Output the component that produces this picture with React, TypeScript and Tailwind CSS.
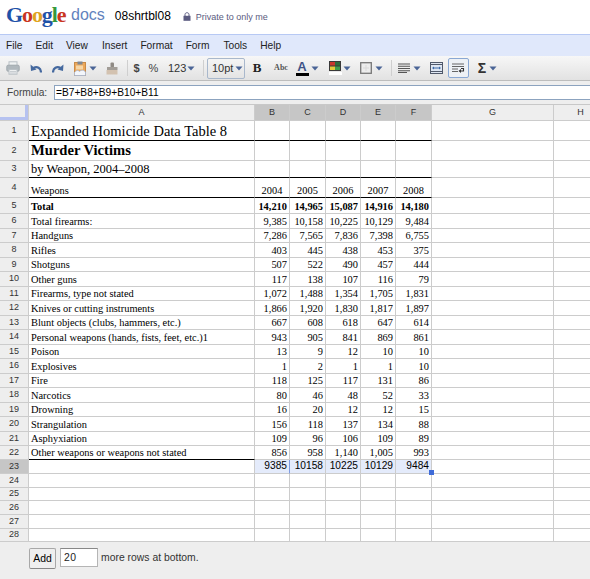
import React from "react";

const SANS = "font-['Liberation_Sans',Arial,sans-serif]";
const SERIF = "font-['Liberation_Serif','Times_New_Roman',serif]";

type Row = { n: number; a?: string; v?: string[]; kind?: string };

const rows: Row[] = [
  { n: 1, a: "Expanded Homicide Data Table 8", kind: "t1" },
  { n: 2, a: "Murder Victims", kind: "t2" },
  { n: 3, a: "by Weapon, 2004–2008", kind: "t3" },
  { n: 4, a: "Weapons", v: ["2004", "2005", "2006", "2007", "2008"], kind: "h" },
  { n: 5, a: "Total", v: ["14,210", "14,965", "15,087", "14,916", "14,180"], kind: "b" },
  { n: 6, a: "Total firearms:", v: ["9,385", "10,158", "10,225", "10,129", "9,484"] },
  { n: 7, a: "Handguns", v: ["7,286", "7,565", "7,836", "7,398", "6,755"] },
  { n: 8, a: "Rifles", v: ["403", "445", "438", "453", "375"] },
  { n: 9, a: "Shotguns", v: ["507", "522", "490", "457", "444"] },
  { n: 10, a: "Other guns", v: ["117", "138", "107", "116", "79"] },
  { n: 11, a: "Firearms, type not stated", v: ["1,072", "1,488", "1,354", "1,705", "1,831"] },
  { n: 12, a: "Knives or cutting instruments", v: ["1,866", "1,920", "1,830", "1,817", "1,897"] },
  { n: 13, a: "Blunt objects (clubs, hammers, etc.)", v: ["667", "608", "618", "647", "614"] },
  { n: 14, a: "Personal weapons (hands, fists, feet, etc.)1", v: ["943", "905", "841", "869", "861"] },
  { n: 15, a: "Poison", v: ["13", "9", "12", "10", "10"] },
  { n: 16, a: "Explosives", v: ["1", "2", "1", "1", "10"] },
  { n: 17, a: "Fire", v: ["118", "125", "117", "131", "86"] },
  { n: 18, a: "Narcotics", v: ["80", "46", "48", "52", "33"] },
  { n: 19, a: "Drowning", v: ["16", "20", "12", "12", "15"] },
  { n: 20, a: "Strangulation", v: ["156", "118", "137", "134", "88"] },
  { n: 21, a: "Asphyxiation", v: ["109", "96", "106", "109", "89"] },
  { n: 22, a: "Other weapons or weapons not stated", v: ["856", "958", "1,140", "1,005", "993"], kind: "last" },
  { n: 23, v: ["9385", "10158", "10225", "10129", "9484"], kind: "sel" },
  { n: 24 },
  { n: 25 },
  { n: 26 },
  { n: 27 },
  { n: 28 },
];

const Arrow = () => (
  <svg width="8" height="5" viewBox="0 0 8 5" className="block">
    <path d="M0.5 0.5H7.5L4 4.5Z" fill="#4a6496" />
  </svg>
);

const ArrowSlot = ({ className = "" }: { className?: string }) => (
  <div className={`w-[8px] flex justify-center ${className}`}>
    <Arrow />
  </div>
);

const Sep = ({ className = "" }: { className?: string }) => (
  <div className={`w-px h-[16px] bg-[#cfcfcf] ${className}`} />
);

const Printer = () => (
  <svg width="14" height="14" viewBox="0 0 14 14">
    <rect x="3" y="0.8" width="8" height="4" fill="#f0f2f3" stroke="#b9c0c5" />
    <rect x="0.8" y="4.2" width="12.4" height="6" rx="1.2" fill="#b0b8bd" stroke="#a2aaaf" />
    <rect x="3" y="8.5" width="8" height="4.7" fill="#eef0f1" stroke="#b9c0c5" />
    <path d="M4 10.5H10M4 12H10" stroke="#c8cdd1" />
  </svg>
);

const Undo = ({ flip = false }: { flip?: boolean }) => (
  <svg width="12" height="10" viewBox="0 0 12 10" className={flip ? "-scale-x-100" : ""}>
    <path d="M11 9.5C11 5 7 3 3.5 5" fill="none" stroke="#45699f" strokeWidth="2.2" />
    <path d="M0.5 1.5L1 8L6.5 6.5Z" fill="#45699f" />
  </svg>
);

const Paste = () => (
  <svg width="12" height="15" viewBox="0 0 12 15">
    <rect x="0.5" y="1.5" width="11" height="13" fill="#eda85a" stroke="#c98b47" />
    <rect x="3.5" y="0.5" width="5" height="3" fill="#7f8894" />
    <rect x="2" y="4.5" width="7" height="4" fill="#f6d6a6" />
    <path d="M0.5 14.5V11.5C2.5 9 4 9 5.5 10.5C7.5 8.5 10 9 11.5 11V14.5Z" fill="#f3f6fb" stroke="#9db4d8" strokeWidth="0.7" />
  </svg>
);

const Paint = () => (
  <svg width="12" height="13" viewBox="0 0 12 13">
    <rect x="4.5" y="0.5" width="3.5" height="5" rx="1" fill="#8f8a84" />
    <rect x="1" y="5" width="10.5" height="3" fill="#a29d97" />
    <path d="M0.5 8H11.5V12.5H0.5Z" fill="#d3c2b0" />
  </svg>
);

const Fill = () => (
  <svg width="12" height="10" viewBox="0 0 12 10">
    <rect width="12" height="10" fill="#3a3a3a" />
    <rect x="1" y="1" width="5" height="3.5" fill="#c8362c" />
    <rect x="6" y="1" width="5" height="3.5" fill="#2c6b3c" />
    <rect x="1" y="5.5" width="5" height="3.5" fill="#e3c83a" />
    <rect x="6" y="5.5" width="5" height="3.5" fill="#3c9c4c" />
  </svg>
);

const Border = () => (
  <svg width="12" height="12" viewBox="0 0 12 12">
    <rect x="0.7" y="0.7" width="10.6" height="10.6" fill="#ececec" stroke="#777" strokeWidth="1.3" />
    <path d="M6 3V9M3 6H9" stroke="#d8d8d8" />
  </svg>
);

const Align = () => (
  <svg width="12" height="10" viewBox="0 0 12 10">
    <path d="M0 1H12M0 3.3H12M0 5.5H12M0 7.7H12M0 9.5H9" stroke="#555" strokeWidth="1.1" />
  </svg>
);

const Merge = () => (
  <svg width="13" height="12" viewBox="0 0 13 12">
    <rect x="0.5" y="0.5" width="12" height="11" fill="#dfe7f3" stroke="#50596a" />
    <path d="M0.5 2.5H12.5M0.5 9.5H12.5" stroke="#50596a" />
    <path d="M3 6H10" stroke="#3d6aa8" />
    <path d="M2 6L4 4.5V7.5ZM11 6L9 4.5V7.5Z" fill="#3d6aa8" />
  </svg>
);

const Wrap = () => (
  <svg width="13" height="10" viewBox="0 0 13 10">
    <path d="M0 1H12M0 3.5H12M0 6H6M0 8.5H6" stroke="#666" strokeWidth="1.1" />
    <path d="M9 5.5H11.5V8H8.5" fill="none" stroke="#333" strokeWidth="1.1" />
    <path d="M9 6L9 10L6.5 8Z" fill="#333" />
  </svg>
);

const Lock = () => (
  <svg width="8" height="9" viewBox="0 0 8 9" className="block">
    <path d="M2 4V2.6C2 1.4 2.9 0.7 4 0.7C5.1 0.7 6 1.4 6 2.6V4" fill="none" stroke="#5b5b80" />
    <rect x="0.5" y="3.8" width="7" height="5" fill="#5b5b80" />
  </svg>
);

function Toolbar() {
  return (
    <div className={`flex items-center h-[25px] border-b border-[#bdbdbd] bg-gradient-to-b from-[#f7f7f7] to-[#e2e2e2] text-[#333] text-[11px] ${SANS}`}>
      <div className="w-[26px] flex justify-center"><Printer /></div>
      <div className="w-[20px] flex justify-center"><Undo /></div>
      <div className="w-[24px] flex justify-center"><Undo flip /></div>
      <div className="w-[19px] flex justify-center"><Paste /></div>
      <ArrowSlot />
      <div className="w-[30px] flex justify-center"><Paint /></div>
      <Sep />
      <div className="w-[17px] text-center font-bold text-[#444]">$</div>
      <div className="w-[17px] text-center text-[#444]">%</div>
      <div className="w-[25px] pl-[6px]">123</div>
      <ArrowSlot />
      <Sep className="ml-[8px]" />
      <div className="ml-[3px] w-[38px] h-[21px] flex items-center pl-[4px] gap-[3px] border border-[#a9b8cc] rounded-[2px]">
        <span className="w-[20px]">10pt</span>
        <Arrow />
      </div>
      <div className={`w-[24px] text-center font-bold text-[13px] text-[#222] ${SERIF}`}>B</div>
      <div className={`w-[24px] text-center font-bold text-[8px] text-[#555] ${SERIF}`}>Abc</div>
      <div className="w-[18px] flex flex-col items-center">
        <span className="font-bold text-[13px] leading-[12px] text-[#3f5488]">A</span>
        <div className="w-[13px] h-[3px] bg-black" />
      </div>
      <ArrowSlot />
      <div className="ml-[9px] w-[14px] flex flex-col items-center gap-[1px]">
        <Fill />
        <div className="w-[13px] h-[3px] bg-white" />
      </div>
      <ArrowSlot className="ml-[1px]" />
      <div className="ml-[8px] w-[14px] flex justify-center"><Border /></div>
      <ArrowSlot className="ml-[2px]" />
      <Sep className="ml-[8px]" />
      <div className="ml-[5px] w-[14px] flex justify-center"><Align /></div>
      <ArrowSlot className="ml-[2px]" />
      <div className="ml-[9px] w-[13px]"><Merge /></div>
      <div className="ml-[5px] w-[21px] h-[20px] flex items-center justify-center border border-[#8aa8d4] rounded-[2px] bg-[#eef1f5]"><Wrap /></div>
      <div className="ml-[6px] w-[14px] text-center font-bold text-[14px] text-[#333]">Σ</div>
      <ArrowSlot />
    </div>
  );
}

function GridRow({ r }: { r: Row }) {
  const sel = r.kind === "sel";
  const blackB = r.kind === "t1" || r.kind === "t3" || r.kind === "h";
  const lineB = blackB ? "border-b-black" : "border-b-[#cccccc]";
  const aLine = r.kind === "last" || blackB ? "border-b-black" : "border-b-[#cccccc]";
  const cell = "border-r border-b border-[#cccccc] min-w-0";
  let aText = "text-[10.4px] pb-[1px]";
  if (r.kind === "t1") aText = "text-[14.5px] pb-[2px]";
  if (r.kind === "t2") aText = "text-[14.6px] font-bold pb-[2px]";
  if (r.kind === "t3") aText = "text-[12.5px] pb-[2px]";
  if (r.kind === "b") aText = "text-[10.4px] font-bold pb-[1px]";
  return (
    <>
      <div className={`${cell} ${SANS} flex items-center justify-center text-[9px] text-[#333] ${sel ? "bg-[#c6c6c6]" : "bg-[#eeeeee]"}`}>
        {r.n}
      </div>
      <div className={`${cell} ${aLine} ${SERIF} flex items-end pl-[2px] leading-none whitespace-nowrap text-black ${aText}`}>
        {r.a}
      </div>
      {[0, 1, 2, 3, 4].map((i) => (
        <div
          key={i}
          className={
            sel
              ? `${cell} ${SANS} flex items-center justify-end pr-[2px] leading-none text-[10.2px] text-black bg-[#e4ebfb] border-[#b3c1e2] ${i === 0 ? "border-r-[#7f9be0]" : ""}`
              : `${cell} ${lineB} ${SERIF} flex items-end pb-[1px] leading-none text-[10.4px] text-black ${r.kind === "h" ? "justify-center" : "justify-end pr-[2px]"} ${r.kind === "b" ? "font-bold" : ""}`
          }
        >
          {r.v ? r.v[i] : ""}
        </div>
      ))}
      <div className={cell} />
      <div className={cell} />
    </>
  );
}

export default function App() {
  return (
    <div className={`w-[590px] h-[579px] overflow-hidden bg-white flex flex-col ${SANS}`}>
      {/* Title */}
      <div className="h-[34px] flex items-start pl-[6px]">
        <div className={`${SERIF} font-bold text-[22px] leading-[30px] tracking-[-1.1px] w-[60px]`}>
          <span className="text-[#1f52a8]">G</span>
          <span className="text-[#c9361f]">o</span>
          <span className="text-[#dfa51f]">o</span>
          <span className="text-[#1f52a8]">g</span>
          <span className="text-[#36993c]">l</span>
          <span className="text-[#c9361f]">e</span>
        </div>
        <span className="ml-[5px] text-[16px] leading-[30px] text-[#6282bd]">docs</span>
        <span className="ml-[10px] text-[12px] leading-[32px] text-black">08shrtbl08</span>
        <div className="ml-[12px] h-[34px] flex items-center pb-[2px]"><Lock /></div>
        <span className="ml-[5px] text-[9px] leading-[35px] text-[#5b5b80]">Private to only me</span>
      </div>
      {/* Menu */}
      <div className="h-[22px] border-t border-[#b7c9f4] bg-[#e0e8fb] flex items-center pl-[6px] gap-[13px] text-[10.2px] text-[#222]">
        <span>File</span>
        <span>Edit</span>
        <span className="mr-[1px]">View</span>
        <span>Insert</span>
        <span>Format</span>
        <span className="mr-[1px]">Form</span>
        <span>Tools</span>
        <span>Help</span>
      </div>
      <Toolbar />
      {/* Formula */}
      <div className="h-[24px] border-b border-[#c8c8c8] bg-[#eeeeee] flex items-center pl-[7px] text-[10.2px] text-[#444]">
        <span className="w-[47px]">Formula:</span>
        <div className="flex-1 h-[15px] flex items-center pl-[1px] bg-white border-t border-b border-l border-[#8ca3bf] text-black">
          =B7+B8+B9+B10+B11
        </div>
      </div>
      {/* Grid */}
      <div className="relative grid grid-cols-[29px_226px_35px_36px_35px_35px_36px_122px_54px] grid-rows-[16px_20px_20px_17px_20px_16px_15px_14px_15px_14px_15px_14px_15px_14px_15px_14px_15px_14px_15px_14px_15px_14px_14px_14px_14px_13px_14px_14px_13px]">
        <div className="border-r border-b border-[#cccccc] bg-[#eeeeee]">
          <div className="w-full h-full border-r-[3px] border-b-[3px] border-[#b6c2f0]" />
        </div>
        {["A", "B", "C", "D", "E", "F", "G", "H"].map((c) => (
          <div
            key={c}
            className={`border-r border-b border-[#cccccc] flex items-center justify-center text-[9px] text-[#333] ${
              "BCDEF".includes(c) ? "bg-[#c6c6c6]" : "bg-[#eeeeee]"
            }`}
          >
            {c}
          </div>
        ))}
        {rows.map((r) => (
          <GridRow key={r.n} r={r} />
        ))}
        <div className="absolute left-[429px] top-[365px] w-[5px] h-[5px] bg-[#3f6bd8]" />
      </div>
      {/* Bottom */}
      <div className="flex-1 bg-[#eeeeee] flex items-start pt-[6px] pl-[29px] text-[10.4px] text-[#333]">
        <div className="w-[27px] h-[21px] flex items-center justify-center bg-[#efefef] border border-[#a8a8a8] border-b-[#888] rounded-[2px] text-black">
          Add
        </div>
        <div className="ml-[4px] w-[38px] h-[19px] flex items-center pl-[3px] bg-white border border-[#b5b5b5] border-t-[#888] tracking-[0.5px] text-[#222]">
          20
        </div>
        <span className="ml-[3px] leading-[20px]">more rows at bottom.</span>
      </div>
    </div>
  );
}
